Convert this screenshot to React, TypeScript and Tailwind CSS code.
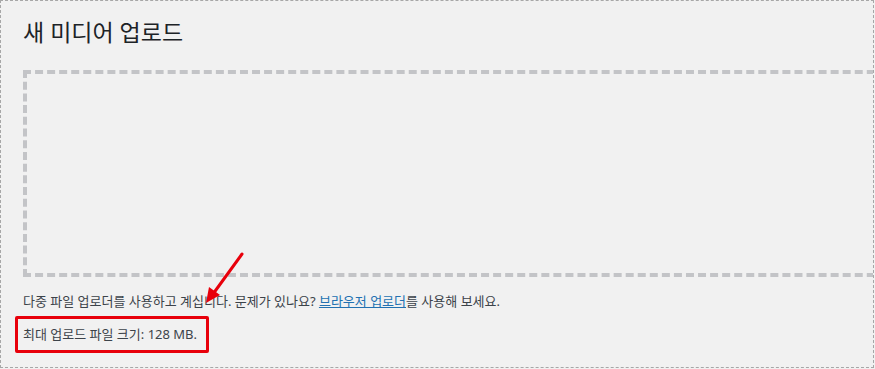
import React from "react";

export default function App() {
  const font = { fontFamily: '"Noto Sans", "Noto Sans CJK KR", sans-serif' };
  return (
    <div className="w-[875px] h-[369px] bg-[#f1f1f1]" style={font}>
      <div className="relative w-[874px] h-[368px] border border-dashed border-[#a7a7a7] overflow-hidden">
        <div className="pl-[22px] pt-[16px]">
          <h1 className="text-[23px] leading-[30px] font-normal text-[#1d2327]">새 미디어 업로드</h1>
          <div className="mt-[23px] w-[900px] h-[207px] border-4 border-dashed border-[#c3c4c7]"></div>
          <p className="mt-[14px] text-[13px] leading-[20px] text-[#3c434a]">
            다중 파일 업로더를 사용하고 계십니다. 문제가 있나요?{" "}
            <a className="text-[#2271b1] underline" href="#">브라우저 업로더</a>를 사용해 보세요.
          </p>
          <p className="mt-[13px] text-[13px] leading-[20px] text-[#3c434a]">최대 업로드 파일 크기: 128 MB.</p>
        </div>
        <div className="absolute left-[14px] top-[315px] w-[194px] h-[37px] border-[3px] border-[#e8000b] rounded-[2px]"></div>
        <svg className="absolute left-0 top-0" width="875" height="369" viewBox="0 0 875 369">
          <line x1="241" y1="253" x2="212" y2="293" stroke="#e8000b" strokeWidth="3" strokeLinecap="round" />
          <polygon points="205,302 208,286 219,294" fill="#e8000b" />
        </svg>
      </div>
    </div>
  );
}
